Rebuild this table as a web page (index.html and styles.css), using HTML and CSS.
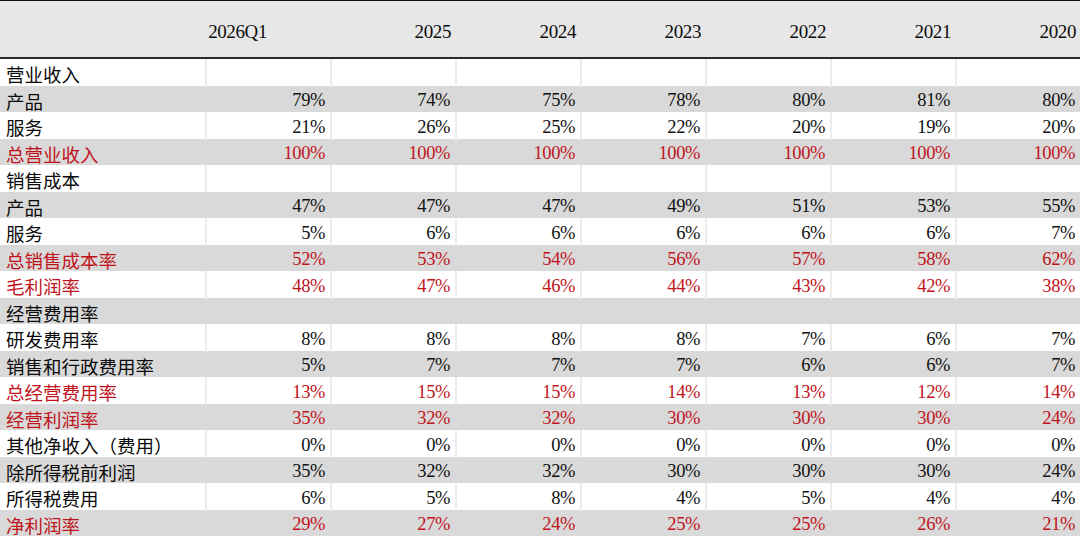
FILE: index.html
```html
<!DOCTYPE html>
<html lang="zh-CN">
<head>
<meta charset="utf-8">
<title>利润表比率</title>
<link rel="stylesheet" href="styles.css">
</head>
<body>
<div class="sheet">
  <div class="row head">
    <div class="cell label"></div>
    <div class="cell yr first">2026Q1</div>
    <div class="cell yr">2025</div>
    <div class="cell yr">2024</div>
    <div class="cell yr">2023</div>
    <div class="cell yr">2022</div>
    <div class="cell yr">2021</div>
    <div class="cell yr">2020</div>
  </div>

  <div class="row w"><div class="cell label">营业收入</div><div class="cell num"></div><div class="cell num"></div><div class="cell num"></div><div class="cell num"></div><div class="cell num"></div><div class="cell num"></div><div class="cell num"></div></div>
  <div class="row g"><div class="cell label">产品</div><div class="cell num">79%</div><div class="cell num">74%</div><div class="cell num">75%</div><div class="cell num">78%</div><div class="cell num">80%</div><div class="cell num">81%</div><div class="cell num">80%</div></div>
  <div class="row w"><div class="cell label">服务</div><div class="cell num">21%</div><div class="cell num">26%</div><div class="cell num">25%</div><div class="cell num">22%</div><div class="cell num">20%</div><div class="cell num">19%</div><div class="cell num">20%</div></div>
  <div class="row g red"><div class="cell label">总营业收入</div><div class="cell num">100%</div><div class="cell num">100%</div><div class="cell num">100%</div><div class="cell num">100%</div><div class="cell num">100%</div><div class="cell num">100%</div><div class="cell num">100%</div></div>
  <div class="row w"><div class="cell label">销售成本</div><div class="cell num"></div><div class="cell num"></div><div class="cell num"></div><div class="cell num"></div><div class="cell num"></div><div class="cell num"></div><div class="cell num"></div></div>
  <div class="row g"><div class="cell label">产品</div><div class="cell num">47%</div><div class="cell num">47%</div><div class="cell num">47%</div><div class="cell num">49%</div><div class="cell num">51%</div><div class="cell num">53%</div><div class="cell num">55%</div></div>
  <div class="row w"><div class="cell label">服务</div><div class="cell num">5%</div><div class="cell num">6%</div><div class="cell num">6%</div><div class="cell num">6%</div><div class="cell num">6%</div><div class="cell num">6%</div><div class="cell num">7%</div></div>
  <div class="row g red"><div class="cell label">总销售成本率</div><div class="cell num">52%</div><div class="cell num">53%</div><div class="cell num">54%</div><div class="cell num">56%</div><div class="cell num">57%</div><div class="cell num">58%</div><div class="cell num">62%</div></div>
  <div class="row w red"><div class="cell label">毛利润率</div><div class="cell num">48%</div><div class="cell num">47%</div><div class="cell num">46%</div><div class="cell num">44%</div><div class="cell num">43%</div><div class="cell num">42%</div><div class="cell num">38%</div></div>
  <div class="row g"><div class="cell label">经营费用率</div><div class="cell num"></div><div class="cell num"></div><div class="cell num"></div><div class="cell num"></div><div class="cell num"></div><div class="cell num"></div><div class="cell num"></div></div>
  <div class="row w"><div class="cell label">研发费用率</div><div class="cell num">8%</div><div class="cell num">8%</div><div class="cell num">8%</div><div class="cell num">8%</div><div class="cell num">7%</div><div class="cell num">6%</div><div class="cell num">7%</div></div>
  <div class="row g"><div class="cell label">销售和行政费用率</div><div class="cell num">5%</div><div class="cell num">7%</div><div class="cell num">7%</div><div class="cell num">7%</div><div class="cell num">6%</div><div class="cell num">6%</div><div class="cell num">7%</div></div>
  <div class="row w red"><div class="cell label">总经营费用率</div><div class="cell num">13%</div><div class="cell num">15%</div><div class="cell num">15%</div><div class="cell num">14%</div><div class="cell num">13%</div><div class="cell num">12%</div><div class="cell num">14%</div></div>
  <div class="row g red"><div class="cell label">经营利润率</div><div class="cell num">35%</div><div class="cell num">32%</div><div class="cell num">32%</div><div class="cell num">30%</div><div class="cell num">30%</div><div class="cell num">30%</div><div class="cell num">24%</div></div>
  <div class="row w"><div class="cell label">其他净收入（费用）</div><div class="cell num">0%</div><div class="cell num">0%</div><div class="cell num">0%</div><div class="cell num">0%</div><div class="cell num">0%</div><div class="cell num">0%</div><div class="cell num">0%</div></div>
  <div class="row g"><div class="cell label">除所得税前利润</div><div class="cell num">35%</div><div class="cell num">32%</div><div class="cell num">32%</div><div class="cell num">30%</div><div class="cell num">30%</div><div class="cell num">30%</div><div class="cell num">24%</div></div>
  <div class="row w"><div class="cell label">所得税费用</div><div class="cell num">6%</div><div class="cell num">5%</div><div class="cell num">8%</div><div class="cell num">4%</div><div class="cell num">5%</div><div class="cell num">4%</div><div class="cell num">4%</div></div>
  <div class="row g red"><div class="cell label">净利润率</div><div class="cell num">29%</div><div class="cell num">27%</div><div class="cell num">24%</div><div class="cell num">25%</div><div class="cell num">25%</div><div class="cell num">26%</div><div class="cell num">21%</div></div>
</div>
</body>
</html>
```

FILE: styles.css
```css
html, body {
  margin: 0;
  padding: 0;
  background: #ffffff;
}

.sheet {
  width: 1080px;
  font-family: "Liberation Serif", "Noto Sans CJK SC", serif;
  color: #111111;
}

.row {
  display: grid;
  grid-template-columns: 205px repeat(7, 125px);
  height: 26.5px;
}

.row.head {
  height: 56px;
  background: #e7e7e7;
  border-top: 2px solid #111111;
  border-bottom: 2px solid #2a2a2a;
  box-sizing: content-box;
  margin-top: -1px;
}

.cell {
  display: flex;
  align-items: center;
  box-sizing: border-box;
  white-space: nowrap;
  padding-top: 2px;
}

.head .cell {
  padding-top: 5px;
}

.yr {
  justify-content: flex-end;
  padding-right: 4px;
  font-size: 19px;
  letter-spacing: -0.4px;
  color: #0d0d0d;
}

.yr.first {
  padding-right: 63px;
}

.label {
  font-family: "Noto Sans CJK SC", "Liberation Sans", sans-serif;
  font-size: 18.5px;
  font-weight: 400;
  padding-left: 6px;
  color: #0a0a0a;
}

.num {
  justify-content: flex-end;
  padding-right: 5px;
  font-size: 18.5px;
  letter-spacing: -0.4px;
  border-left: 2px solid transparent;
}

.row.w {
  background: #ffffff;
}

.row.w .num {
  border-left-color: #ececec;
}

.row.g {
  background: #d9d9d9;
}

.row.red .cell {
  color: #c0141c;
}
```
